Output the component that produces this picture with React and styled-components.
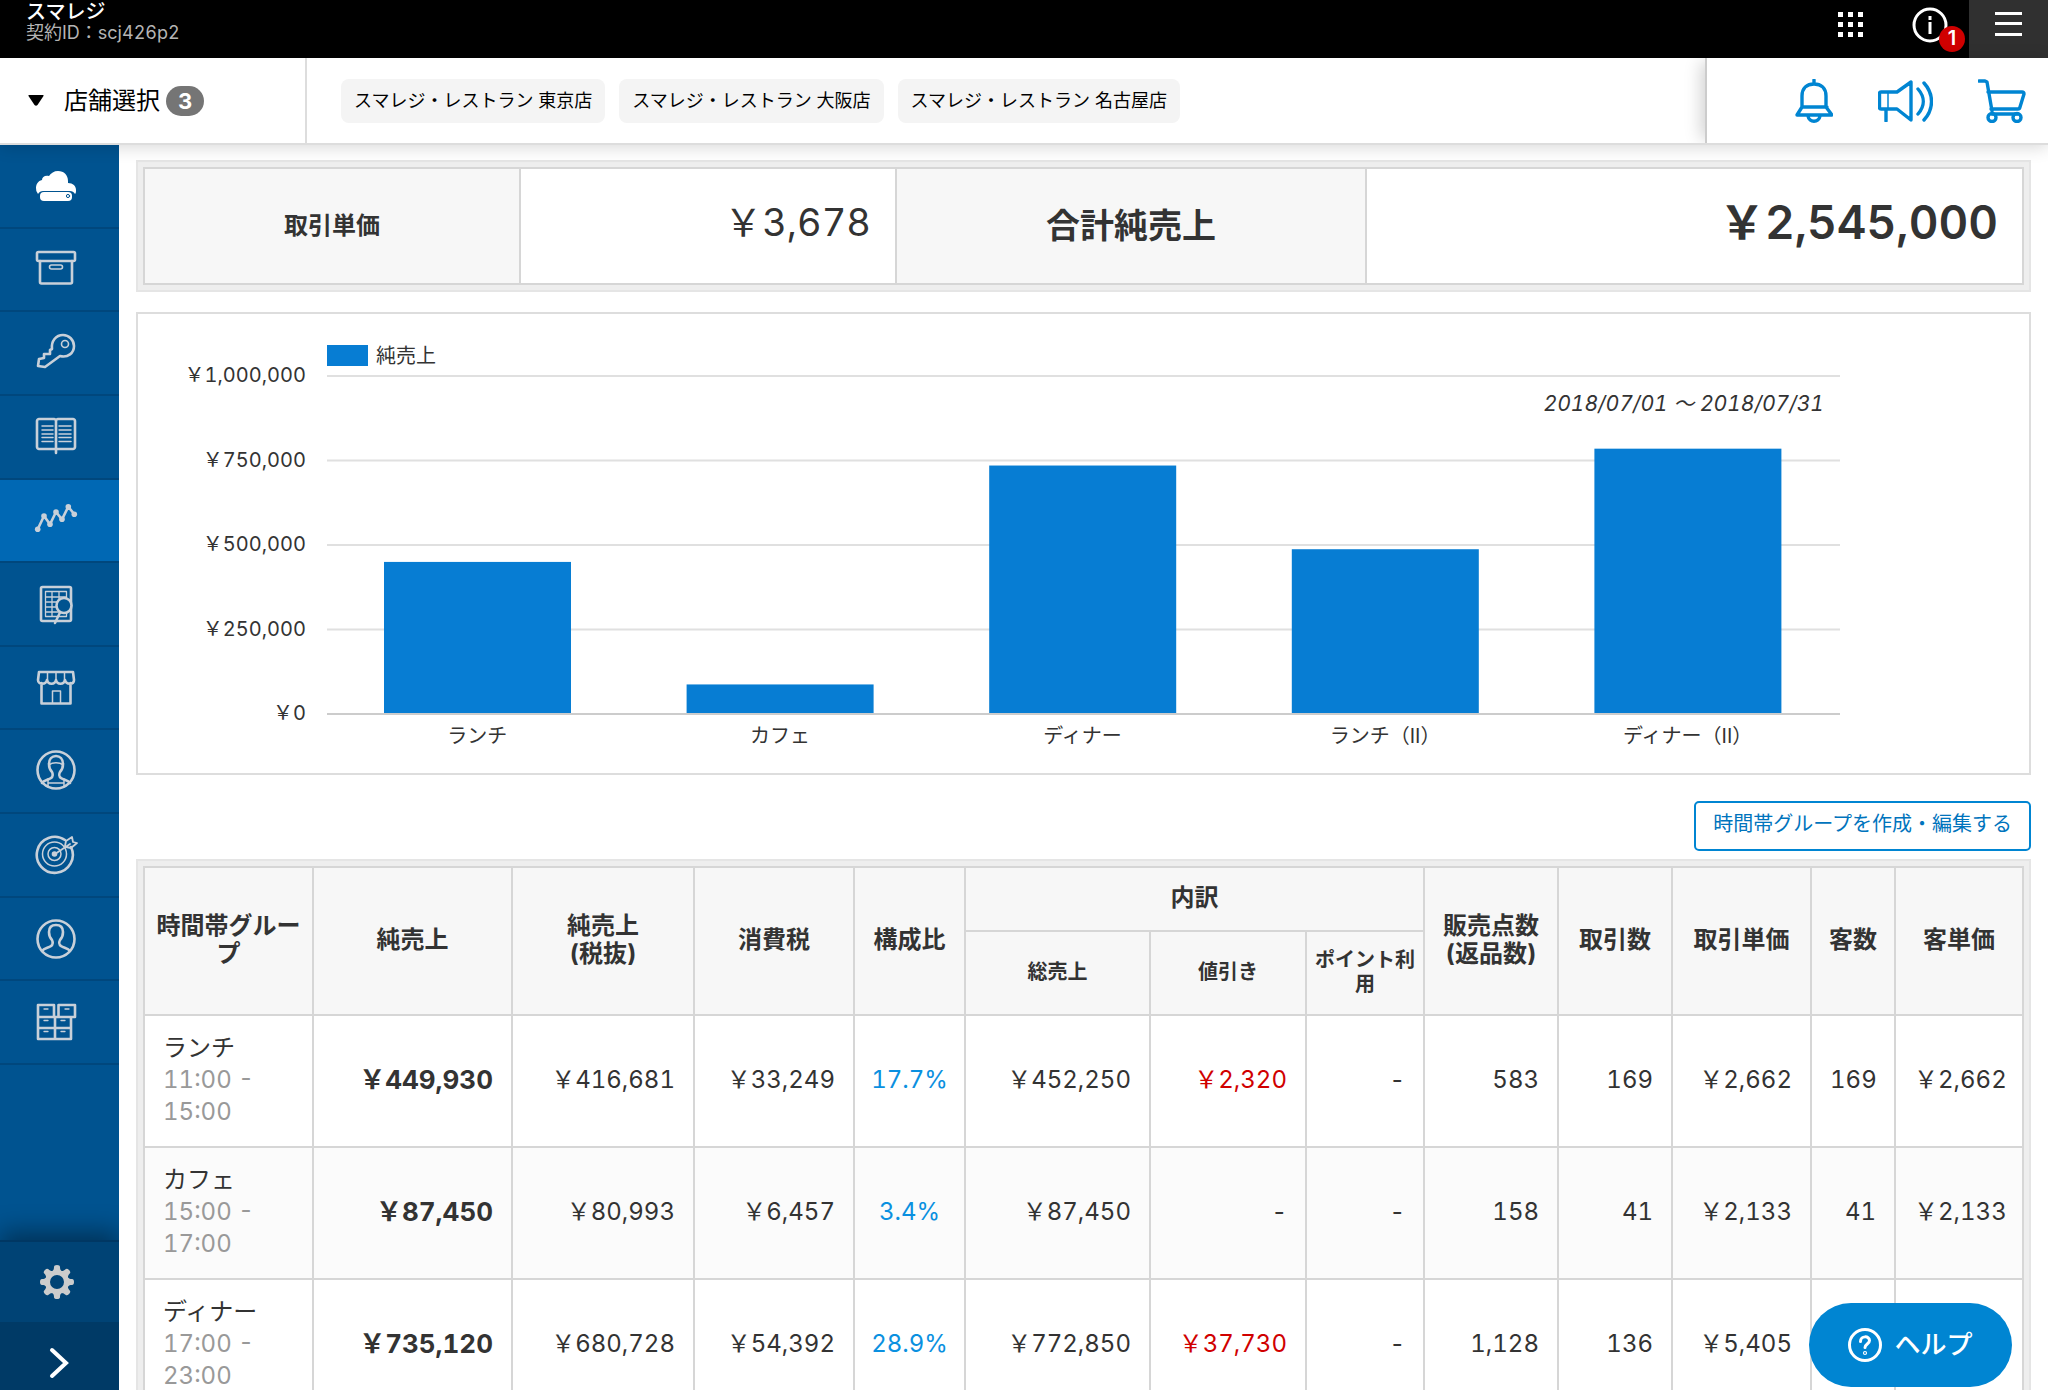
import React from 'react';
import styled, { createGlobalStyle, css } from 'styled-components';

const shops = [
  'スマレジ・レストラン 東京店',
  'スマレジ・レストラン 大阪店',
  'スマレジ・レストラン 名古屋店',
];

const chartData = [
  { label: 'ランチ', value: 449930 },
  { label: 'カフェ', value: 87450 },
  { label: 'ディナー', value: 735120 },
  { label: 'ランチ（II）', value: 487500 },
  { label: 'ディナー（II）', value: 785000 },
];

const yTicks = [
  { label: '￥1,000,000', value: 1000000 },
  { label: '￥750,000', value: 750000 },
  { label: '￥500,000', value: 500000 },
  { label: '￥250,000', value: 250000 },
  { label: '￥0', value: 0 },
];

const columnWidths = [169, 199, 182, 160, 111, 185, 156, 118, 134, 114, 139, 84, 128];

const rows = [
  {
    name: 'ランチ', from: '11:00', to: '15:00', net: '￥449,930', netNoTax: '￥416,681', tax: '￥33,249',
    ratio: '17.7%', gross: '￥452,250', discount: '￥2,320', point: '-', items: '583', deals: '169',
    dealPrice: '￥2,662', guests: '169', guestPrice: '￥2,662',
  },
  {
    name: 'カフェ', from: '15:00', to: '17:00', net: '￥87,450', netNoTax: '￥80,993', tax: '￥6,457',
    ratio: '3.4%', gross: '￥87,450', discount: '-', point: '-', items: '158', deals: '41',
    dealPrice: '￥2,133', guests: '41', guestPrice: '￥2,133',
  },
  {
    name: 'ディナー', from: '17:00', to: '23:00', net: '￥735,120', netNoTax: '￥680,728', tax: '￥54,392',
    ratio: '28.9%', gross: '￥772,850', discount: '￥37,730', point: '-', items: '1,128', deals: '136',
    dealPrice: '￥5,405',
  },
];

// Sidebar icons, all drawn on a 44x44 grid
const menuIcons = [
  {
    name: 'クラウド',
    icon: (
      <g fill="#fff" stroke="none">
        <path d="M4 30a8 8 0 0 1-2-6c0-4 2-7 6-8 0-3 3-5 7-4 2-3 5-5 9-5 6 0 10 4 10 10v2c5 0 8 3 8 7 0 2 0 3-1 4-1-2-3-3-5-3H9c-2 0-4 1-5 3z" />
        <rect x="6" y="28" width="32" height="9" rx="4" />
        <circle cx="34" cy="32" r="1.6" fill="none" stroke="#005390" strokeWidth="1" />
      </g>
    ),
  },
  {
    name: '商品',
    icon: (
      <>
        <rect x="3" y="5" width="38" height="9" rx="1.500" />
        <path d="M6 14v21c0 1 .6 1.500 1.500 1.500h29c1 0 1.500-.5 1.500-1.500V14" />
        <rect x="15.500" y="18" width="13" height="4" rx="2" strokeWidth="1.600" />
      </>
    ),
  },
  {
    name: '鍵',
    icon: (
      <>
        <path d="M18 18c-1-8 4-14 11-14 6 0 11 5 11 11 0 7-6 12-14 10L11 36l-7-1 1-7 5-1v-4l6 0v-4z" />
        <circle cx="31" cy="13" r="3.500" strokeWidth="1.600" />
      </>
    ),
  },
  {
    name: '帳簿',
    icon: (
      <>
        <path d="M22 34H5c-1 0-2-1-2-2V6c0-1 1-2 2-2h15c1 0 2 1 2 2 0-1 1-2 2-2h15c1 0 2 1 2 2v26c0 1-1 2-2 2H22zM22 6v32" />
        <path strokeWidth="1.500" d="M8 11h11M8 15h11M8 19h11M8 22.500h11M8 26.500h11M25 11h12M25 15h12M25 19h12M25 22.500h12M25 26.500h12" />
      </>
    ),
  },
  {
    name: '売上分析',
    active: true,
    icon: (
      <>
        <path d="M3.700 31.300 10 18l6 8.300L22 14l6 7.300 6.300-12.600 6 7.600" />
        <g fill="currentColor" stroke="none">
          <circle cx="3.700" cy="31.300" r="2.800" />
          <circle cx="10" cy="18" r="2.800" />
          <circle cx="16" cy="26.300" r="2.800" />
          <circle cx="22" cy="14" r="2.800" />
          <circle cx="28" cy="21.300" r="2.800" />
          <circle cx="34.300" cy="8.700" r="2.800" />
          <circle cx="40.300" cy="16.300" r="2.800" />
        </g>
      </>
    ),
  },
  {
    name: 'レポート',
    icon: (
      <>
        <rect x="7" y="5" width="30" height="34" rx="1.500" />
        <path strokeWidth="1.300" d="M11.500 9.500h21v25h-21zM11.500 15h21M11.500 20h13M11.500 25h11M11.500 30h13M18 9.500v25M25 9.500v8" />
        <circle cx="30" cy="23.500" r="7.500" fill="#005390" />
        <path d="M26 30.500 21 41" strokeWidth="2.500" />
      </>
    ),
  },
  {
    name: '店舗',
    icon: (
      <>
        <path d="M7.500 17v20.500h29V17M5 6h34l1 8c0 5-8 5-9 0-1 5-8 5-9 0-1 5-8 5-9 0-1 5-9 5-9 0z" />
        <path strokeWidth="1.500" d="M13.500 6v9M22 6v9M30.500 6v9M18.500 37V25h8v12" />
      </>
    ),
  },
  {
    name: 'スタッフ',
    icon: (
      <>
        <circle cx="22" cy="21" r="18.500" />
        <path d="M8 34c2-3 6-3 9-5 2-1 2-4 1-6-2-2-3-5-3-8 0-5 3-8 7-8s7 3 7 8c0 3-1 6-3 8-1 2-1 5 1 6 3 2 7 2 9 5" />
        <path strokeWidth="1.500" d="M15 16c3-3 11-3 14 0M14 30v8M30 30v8M15 34h14" />
      </>
    ),
  },
  {
    name: '目標',
    icon: (
      <>
        <path d="M31 7a18 18 0 1 0 6 7" />
        <circle cx="20.500" cy="21" r="12" strokeWidth="1.500" />
        <circle cx="20.500" cy="21" r="6.500" strokeWidth="1.500" />
        <circle cx="20.500" cy="21" r="2.800" fill="currentColor" stroke="none" />
        <path strokeWidth="1.800" d="m21 21 15-10M31 13l1-5 6-4 1 5 4 1-6 5-5-1z" />
      </>
    ),
  },
  {
    name: '会員',
    icon: (
      <>
        <circle cx="22" cy="22" r="18.500" />
        <path d="M8 34c2-3 6-3 9-5 2-1 2-4 1-6-2-2-3-5-3-8 0-5 3-7 7-7s7 2 7 7c0 3-1 6-3 8-1 2-1 5 1 6 3 2 7 2 9 5" />
      </>
    ),
  },
  {
    name: '在庫',
    icon: (
      <>
        <path d="M4 5h16v12H4zM24.500 5H41v12H24.500zM4 17h17v11H4zM21 17h16v11H21zM4 28h17v11H4zM21 28h16v11H21z" />
        <path strokeWidth="1.300" d="M10 9h4M31 9h4M10 20.500h4M27 20.500h4M10 31.500h4M27 31.500h4" />
      </>
    ),
  },
];

const SalesChart = () => {
  const left = 189;
  const width = 1513;
  const base = 400;
  const plotHeight = 338;
  const step = width / chartData.length;
  const y = (value) => base - (value / 1000000) * plotHeight;

  return (
    <Chart viewBox="0 0 1891 459" role="img" aria-label="時間帯別純売上">
      {yTicks.map((tick) => (
        <g key={tick.label}>
          <rect x={left} y={y(tick.value) - 1} width={width} height="2" fill={tick.value ? '#e0e0e0' : '#ccc'} />
          <text x="168" y={y(tick.value) + 6} fontSize="20" textAnchor="end">{tick.label}</text>
        </g>
      ))}
      {chartData.map((item, i) => (
        <g key={item.label}>
          <rect
            x={left + step * i + 57}
            y={y(item.value)}
            width="187"
            height={base - 1 - y(item.value)}
            fill="#077dd3"
          />
          <text x={left + step * (i + 0.5) - 1} y="429" fontSize="20" textAnchor="middle">{item.label}</text>
        </g>
      ))}
      <rect x={left} y="31" width="41" height="21" fill="#077dd3" />
      <text x="238" y="49" fontSize="20">純売上</text>
      <text x="1686" y="97" fontSize="21" fontStyle="italic" textAnchor="end">2018/07/01 ～ 2018/07/31</text>
    </Chart>
  );
};

const SalesTable = () => (
  <Frame>
    <DataTable>
      <colgroup>
        {columnWidths.map((w, i) => <Col key={i} $width={w} />)}
      </colgroup>
      <thead>
        <tr>
          <HeadCell rowSpan="2">時間帯グループ</HeadCell>
          <HeadCell rowSpan="2">純売上</HeadCell>
          <HeadCell rowSpan="2">純売上<br />(税抜)</HeadCell>
          <HeadCell rowSpan="2">消費税</HeadCell>
          <HeadCell rowSpan="2">構成比</HeadCell>
          <HeadCell colSpan="3" $height={64}>内訳</HeadCell>
          <HeadCell rowSpan="2">販売点数<br />(返品数)</HeadCell>
          <HeadCell rowSpan="2">取引数</HeadCell>
          <HeadCell rowSpan="2">取引単価</HeadCell>
          <HeadCell rowSpan="2">客数</HeadCell>
          <HeadCell rowSpan="2">客単価</HeadCell>
        </tr>
        <tr>
          <HeadCell $small $height={84}>総売上</HeadCell>
          <HeadCell $small>値引き</HeadCell>
          <HeadCell $small>ポイント利用</HeadCell>
        </tr>
      </thead>
      <tbody>
        {rows.map((row) => (
          <BodyRow key={row.name}>
            <NameCell>
              {row.name}
              <Hours>{row.from} -<br />{row.to}</Hours>
            </NameCell>
            <Cell $bold>{row.net}</Cell>
            <Cell>{row.netNoTax}</Cell>
            <Cell>{row.tax}</Cell>
            <Cell $ratio>{row.ratio}</Cell>
            <Cell>{row.gross}</Cell>
            <Cell $minus={row.discount !== '-'}>{row.discount}</Cell>
            <Cell>{row.point}</Cell>
            <Cell>{row.items}</Cell>
            <Cell>{row.deals}</Cell>
            <Cell>{row.dealPrice}</Cell>
            <Cell>{row.guests}</Cell>
            <Cell>{row.guestPrice}</Cell>
          </BodyRow>
        ))}
      </tbody>
    </DataTable>
  </Frame>
);

const Sidebar = () => (
  <Side>
    <MenuList>
      {menuIcons.map((item) => (
        <MenuItem key={item.name}>
          <MenuLink href="#" aria-label={item.name} $active={item.active}>
            <LineIcon viewBox="0 0 44 44" width="44" height="44">{item.icon}</LineIcon>
          </MenuLink>
        </MenuItem>
      ))}
    </MenuList>
    <SideBottom>
      <SettingButton aria-label="設定">
        <svg viewBox="-17 -17 34 34" width="34" height="34" fill="#ccc">
          {[0, 45, 90, 135, 180, 225, 270, 315].map((deg) => (
            <path key={deg} transform={`rotate(${deg})`} d="M-6-10c2.500-1 3-3 3-5q0-2 3-2t3 2c0 2 .5 4 3 5z" />
          ))}
          <circle r="9.500" fill="none" stroke="#ccc" strokeWidth="5" />
        </svg>
      </SettingButton>
      <OpenButton aria-label="メニューを開く">
        <svg viewBox="0 0 20 32" width="20" height="32" fill="none" stroke="#fff" strokeWidth="4" strokeLinecap="round">
          <path d="m3 3 14 13L3 29" />
        </svg>
      </OpenButton>
    </SideBottom>
  </Side>
);

const App = () => (
  <>
    <GlobalStyle />
    <Page>
      <TopBar>
        <Account>
          <AccountName>スマレジ</AccountName>
          <AccountId>契約ID：scj426p2</AccountId>
        </Account>
        <TopButton aria-label="アプリ">
          <svg viewBox="0 0 25 26" width="25" height="26" fill="#fff">
            {[0, 10, 20].map((y) => [0, 10, 20].map((x) => (
              <rect key={`${x}-${y}`} x={x} y={y} width="5" height="5" />
            )))}
          </svg>
        </TopButton>
        <TopButton aria-label="お知らせ">
          <svg viewBox="0 0 36 36" width="36" height="36" fill="none" stroke="#fff" strokeWidth="3">
            <circle cx="18" cy="18" r="16" />
            <path d="M18 15v12M18 9v4" />
          </svg>
          <AlertCount>1</AlertCount>
        </TopButton>
        <HamburgerButton aria-label="メニュー">
          <svg viewBox="0 0 27 24" width="27" height="24" fill="#fff">
            <path d="M0 0h27v3H0zM0 10h27v3H0zM0 21h27v3H0z" />
          </svg>
        </HamburgerButton>
      </TopBar>

      <ShopBar>
        <ShopSelect>
          <svg viewBox="0 0 16 11" width="16" height="11"><path d="M1 0h14q1 0 .5 1L9.500 10q-1.500 1.500-3 0L.5 1Q0 0 1 0z" /></svg>
          <ShopLabel>店舗選択</ShopLabel>
          <ShopCount>3</ShopCount>
        </ShopSelect>
        <ShopTags>
          {shops.map((shop) => <ShopTag key={shop}>{shop}</ShopTag>)}
        </ShopTags>
        <Tools>
          <ToolButton aria-label="通知">
            <LineIcon $blue viewBox="0 0 38 44" width="38" height="44">
              <path d="M19 1v4M7 28V17C7 9 12 5 19 5s12 4 12 12v11l6 8H2zM7 28h25M13 37c1 7 11 7 12 0" />
            </LineIcon>
          </ToolButton>
          <ToolButton aria-label="お知らせ放送">
            <LineIcon $blue viewBox="0 0 55 42" width="55" height="42">
              <path d="M3 12h16L33 2v38L19 29H3q-1.500 0-1.500-1.500v-14Q1.500 12 3 12zM8 29v12M40 9c7 8 7 17 0 25M46 3c10 11 10 26 0 37" />
              <path strokeWidth="1.500" d="M10 12v17" />
            </LineIcon>
          </ToolButton>
          <ToolButton aria-label="カート">
            <LineIcon $blue viewBox="0 0 48 44" width="48" height="44">
              <path d="M1 2h6l2 1 5 29M10 13h34q2 0 2 2l-4 13q-.5 2-2 2H13M14 35h26" />
              <circle cx="14" cy="38.500" r="4" />
              <circle cx="39" cy="38.500" r="4" />
            </LineIcon>
          </ToolButton>
        </Tools>
      </ShopBar>

      <Body>
        <Sidebar />
        <Main>
          <Frame>
            <DataTable>
              <colgroup>
                {[376, 376, 470, 657].map((w, i) => <Col key={i} $width={w} />)}
              </colgroup>
              <tbody>
                <tr>
                  <SummaryHead>取引単価</SummaryHead>
                  <SummaryValue>￥3,678</SummaryValue>
                  <SummaryHead $large>合計純売上</SummaryHead>
                  <SummaryValue $large>￥2,545,000</SummaryValue>
                </tr>
              </tbody>
            </DataTable>
          </Frame>
          <ChartPanel>
            <SalesChart />
          </ChartPanel>
          <Actions>
            <EditButton>時間帯グループを作成・編集する</EditButton>
          </Actions>
          <SalesTable />
        </Main>
      </Body>

      <HelpButton>
        <svg viewBox="0 0 34 34" width="34" height="34" fill="none" stroke="#fff" strokeWidth="3" strokeLinecap="round">
          <circle cx="17" cy="17" r="15.500" />
          <path d="M12.500 13.500c0-6 9-6 9-1 0 3.500-4.500 3.500-4.500 7" />
          <circle cx="17" cy="25" r=".6" />
        </svg>
        <HelpLabel>ヘルプ</HelpLabel>
      </HelpButton>
    </Page>
  </>
);

export default App;


const GlobalStyle = createGlobalStyle`
  * {
    box-sizing: border-box;
  }
  body {
    margin: 0;
    background: #fff;
    color: #333;
    font-family: Inter, "Noto Sans CJK JP", sans-serif;
    font-variant-numeric: tabular-nums;
  }
  button {
    margin: 0;
    padding: 0;
    border: none;
    background: none;
    font-family: inherit;
    cursor: pointer;
  }
`;

const Page = styled.div`
  display: flex;
  flex-direction: column;
  height: 100vh;
`;

const TopBar = styled.header`
  display: flex;
  flex: none;
  height: 58px;
  background: #000;
`;

const Account = styled.div`
  flex: 1;
  padding: 2px 0 0 26px;
`;

const AccountName = styled.div`
  color: #fff;
  font-size: 20px;
  font-weight: 500;
  line-height: 20px;
`;

const AccountId = styled.div`
  color: #b4b4b4;
  font-size: 18px;
  line-height: 22px;
`;

const TopButton = styled.button`
  position: relative;
  display: flex;
  align-items: center;
  justify-content: center;
  width: 79px;
  height: 50px;
`;

const AlertCount = styled.span`
  position: absolute;
  right: 4px;
  bottom: -2px;
  width: 26px;
  height: 26px;
  border-radius: 50%;
  background: #d00000;
  color: #fff;
  font-size: 20px;
  font-weight: 600;
  line-height: 24px;
`;

const HamburgerButton = styled(TopButton)`
  height: 58px;
  padding-bottom: 10px;
  background: #303030;
`;

const ShopBar = styled.div`
  position: relative;
  z-index: 2;
  display: flex;
  flex: none;
  height: 87px;
  border-bottom: 2px solid #ddd;
  background: #fff;
  box-shadow: 0 2px 16px rgba(0, 0, 0, 0.16);
`;

const ShopSelect = styled.button`
  display: flex;
  align-items: center;
  width: 307px;
  padding-left: 28px;
  border-right: 2px solid #ddd;
  color: #000;
`;

const ShopLabel = styled.span`
  margin: 0 6px 0 20px;
  padding-bottom: 4px;
  font-size: 24px;
`;

const ShopCount = styled.span`
  width: 38px;
  height: 30px;
  border-radius: 15px;
  background: #757575;
  color: #fff;
  font-size: 22px;
  font-weight: 700;
  line-height: 30px;
`;

const ShopTags = styled.div`
  display: flex;
  flex: 1;
  align-items: center;
  gap: 14px;
  padding-left: 34px;
`;

const ShopTag = styled.span`
  padding: 0 13px;
  border-radius: 8px;
  background: #f4f4f4;
  color: #000;
  font-size: 18px;
  line-height: 44px;
  white-space: nowrap;
`;

const Tools = styled.div`
  display: flex;
  align-items: center;
  justify-content: flex-end;
  gap: 45px;
  width: 343px;
  padding-right: 22px;
  border-left: 2px solid #ccc;
  background: #fff;
  box-shadow: -8px 0 16px -4px rgba(0, 0, 0, 0.18);
  clip-path: inset(0 0 0 -30px);
`;

const ToolButton = styled.button`
  display: flex;
`;

const LineIcon = styled.svg`
  fill: none;
  stroke: currentColor;
  stroke-width: ${({ $blue }) => ($blue ? 3.4 : 2.6)};
  stroke-linecap: round;
  stroke-linejoin: round;
  color: ${({ $blue }) => ($blue ? '#0085d2' : '#c8d0d9')};
`;

const Body = styled.div`
  display: flex;
  flex: 1;
  min-height: 0;
`;

const Side = styled.nav`
  display: flex;
  flex: none;
  flex-direction: column;
  justify-content: space-between;
  width: 119px;
  background: #005390;
`;

const MenuList = styled.ul`
  display: flex;
  flex-direction: column;
  height: 920px;
  margin: 0;
  padding: 0;
  list-style: none;
`;

const MenuItem = styled.li`
  display: flex;
  flex: 1;
  border-bottom: 2px solid #00477d;
`;

const MenuLink = styled.a`
  display: flex;
  flex: 1;
  align-items: center;
  justify-content: center;
  padding-right: 7px;
  ${({ $active }) => $active && css`
    background: #0068b4;
  `}
`;

const SideBottom = styled.div`
  display: flex;
  flex-direction: column;
  box-shadow: 0 -8px 24px rgba(0, 0, 0, 0.4);
  clip-path: inset(-36px 0 0 0);
`;

const SettingButton = styled.button`
  display: flex;
  align-items: center;
  justify-content: center;
  height: 82px;
  padding-right: 6px;
  border-top: 2px solid #003763;
  background: #004375;
`;

const OpenButton = styled(SettingButton)`
  height: 68px;
  padding: 14px 2px 0 0;
  border: none;
  background: #003a66;
`;

const Main = styled.main`
  flex: 1;
  min-width: 0;
  padding: 15px 17px 0;
  overflow-y: auto;
  scrollbar-width: none;
`;

const Frame = styled.div`
  padding: 5px;
  border: 2px solid #e5e5e5;
  background: #eee;
`;

const DataTable = styled.table`
  width: 100%;
  border-collapse: collapse;
  table-layout: fixed;
  background: #fff;

  th, td {
    border: 2px solid #d6d6d6;
  }
`;

const Col = styled.col`
  width: ${({ $width }) => $width}px;
`;

const SummaryHead = styled.th`
  height: 116px;
  padding: 0 0 6px;
  background: #f7f7f7;
  font-size: ${({ $large }) => ($large ? 34 : 24)}px;
  font-weight: 700;
`;

const SummaryValue = styled.td`
  padding: 0 24px 8px;
  font-size: ${({ $large }) => ($large ? 46 : 38)}px;
  font-weight: ${({ $large }) => ($large ? 600 : 400)};
  line-height: 56px;
  text-align: right;
`;

const ChartPanel = styled.section`
  margin-top: 20px;
  border: 2px solid #ddd;
`;

const Chart = styled.svg`
  display: block;
  width: 100%;
  fill: #333;
`;

const Actions = styled.div`
  display: flex;
  justify-content: flex-end;
  padding: 26px 0 8px;
`;

const EditButton = styled.button`
  height: 50px;
  padding: 0 17px 8px;
  border: 2px solid #0085d2;
  border-radius: 5px;
  color: #0074bd;
  font-size: 20px;
`;

const HeadCell = styled.th`
  height: ${({ $height }) => ($height ? `${$height}px` : 'auto')};
  padding: 0 8px 2px;
  background: #f7f7f7;
  font-size: ${({ $small }) => ($small ? 20 : 24)}px;
  font-weight: 700;
  line-height: ${({ $small }) => ($small ? 24 : 28)}px;
`;

const BodyRow = styled.tr`
  &:nth-child(even) {
    background: #fbfbfb;
  }
`;

const Cell = styled.td`
  padding: 16px 18px 18px;
  font-size: ${({ $bold }) => ($bold ? 26 : 24)}px;
  font-weight: ${({ $bold }) => ($bold ? 700 : 400)};
  line-height: 32px;
  text-align: right;
  white-space: nowrap;
  ${({ $minus }) => $minus && css`
    color: #d00000;
  `}
  ${({ $ratio }) => $ratio && css`
    padding: 16px 0 18px;
    color: #0a90e0;
    text-align: center;
  `}
`;

const NameCell = styled(Cell)`
  text-align: left;
`;

const Hours = styled.div`
  color: #999;
`;

const HelpButton = styled.button`
  position: fixed;
  right: 36px;
  bottom: 3px;
  z-index: 3;
  display: flex;
  align-items: center;
  justify-content: center;
  gap: 12px;
  width: 203px;
  height: 84px;
  border-radius: 42px;
  background: #0085d2;
  color: #fff;
  font-size: 26px;
  font-weight: 500;
`;

const HelpLabel = styled.span`
  padding-bottom: 6px;
`;
